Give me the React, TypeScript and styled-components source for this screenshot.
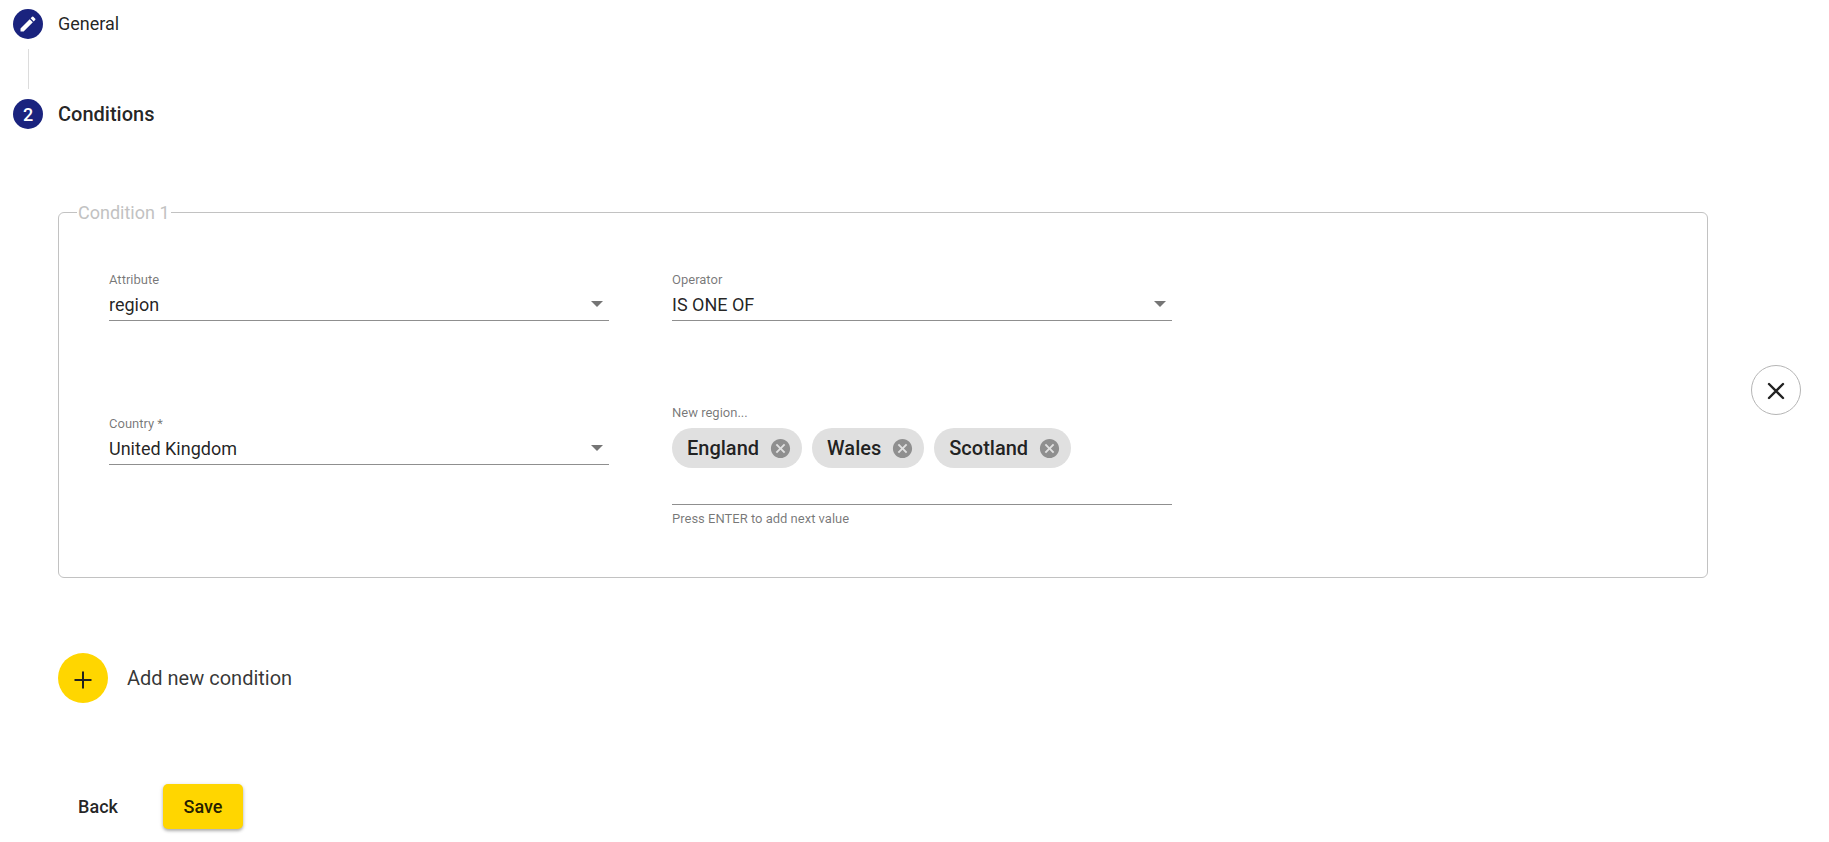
import React, { useState } from "react";
import styled, { createGlobalStyle } from "styled-components";
import { MdCancel, MdEdit } from "react-icons/md";

const GlobalStyle = createGlobalStyle`
  *, *::before, *::after { box-sizing: border-box; }
  body {
    margin: 0;
    background: #fff;
    color: rgba(0, 0, 0, 0.87);
    font-family: Roboto, "Liberation Sans", sans-serif;
    font-size: 18px;
  }
  button, select, input { font: inherit; color: inherit; }
`;

const Page = styled.main`
  padding: 9px 28px 12px 13px;
`;

const StepHeader = styled.div`
  display: flex;
  align-items: center;
  gap: 15px;
  height: 30px;
`;

const StepIcon = styled.span`
  display: flex;
  align-items: center;
  justify-content: center;
  width: 30px;
  height: 30px;
  border-radius: 50%;
  background: #1a237e;
  color: #fff;
  font-weight: 500;
`;

const StepLabel = styled.h2<{ $active?: boolean }>`
  margin: 0;
  font-size: ${(p) => (p.$active ? 20 : 18)}px;
  font-weight: ${(p) => (p.$active ? 500 : 400)};
  line-height: 24px;
`;

const StepLine = styled.div`
  width: 1px;
  height: 40px;
  margin: 10px 15px;
  background: #dcdcdc;
`;

const StepContent = styled.form`
  margin: 72px 0 0 45px;
`;

const ConditionRow = styled.div`
  display: flex;
  align-items: center;
  gap: 43px;
`;

const ConditionGroup = styled.fieldset`
  flex: 1;
  min-width: 0;
  margin: 0;
  padding: 0;
  border: 1px solid #c2c2c2;
  border-radius: 6px;
`;

const ConditionTitle = styled.legend`
  margin-left: 18px;
  padding: 2px 1px 0;
  color: #c2c2c2;
  font-size: 18px;
  line-height: 20px;
`;

const FieldGrid = styled.div`
  display: grid;
  grid-template-columns: repeat(2, minmax(0, 500px));
  align-items: center;
  gap: 33px 63px;
  padding: 49px 50px 50px;
`;

const Field = styled.div`
  padding-bottom: 51px;
`;

const FieldLabel = styled.label`
  display: block;
  color: rgba(0, 0, 0, 0.54);
  font-size: 13px;
  line-height: 16px;
`;

const SelectBox = styled.div`
  display: flex;
  align-items: center;
  height: 33px;
  padding-right: 6px;
  border-bottom: 1px solid #8f8f8f;
`;

const Select = styled.select`
  flex: 1;
  min-width: 0;
  height: 20px;
  margin: 2px 0 0;
  padding: 0;
  border: 0;
  appearance: none;
  background: none;
  outline: none;
  font-size: 18px;
  line-height: 20px;
`;

const Arrow = styled.span`
  border: 6px solid transparent;
  border-top-color: #757575;
  border-bottom: 0;
`;

const ChipBox = styled.div`
  display: flex;
  flex-wrap: wrap;
  gap: 10px;
  padding-top: 7px;
  border-bottom: 1px solid #8f8f8f;
`;

const Chip = styled.span`
  display: flex;
  align-items: center;
  gap: 10px;
  height: 40px;
  padding: 0 10px 0 15px;
  border-radius: 20px;
  background: #e0e0e0;
  font-size: 20px;
  font-weight: 500;
`;

const ChipRemove = styled.button`
  display: flex;
  padding: 0;
  border: 0;
  background: none;
  color: #8f8f8f;
  cursor: pointer;
`;

const ChipInput = styled.input`
  flex: 1 0 100%;
  height: 26px;
  padding: 0;
  border: 0;
  outline: none;
  background: none;
`;

const Hint = styled.p`
  margin: 6px 0 0;
  color: rgba(0, 0, 0, 0.54);
  font-size: 13px;
  line-height: 16px;
`;

const RoundButton = styled.button<{ $filled?: boolean }>`
  display: flex;
  flex: none;
  align-items: center;
  justify-content: center;
  width: 50px;
  height: 50px;
  padding: 3px 0 0;
  border: ${(p) => (p.$filled ? "0" : "1px solid #b5b5b5")};
  border-radius: 50%;
  background: ${(p) => (p.$filled ? "#ffd600" : "#fff")};
  cursor: pointer;
`;

const AddRow = styled.div`
  display: flex;
  align-items: center;
  gap: 19px;
  margin-top: 75px;
`;

const AddLabel = styled.label`
  font-size: 20px;
  line-height: 24px;
  color: rgba(0, 0, 0, 0.8);
`;

const Actions = styled.div`
  display: flex;
  gap: 25px;
  margin-top: 81px;
`;

const ActionButton = styled.button<{ $primary?: boolean }>`
  height: 45px;
  min-width: 80px;
  padding: 0 20px;
  border: 0;
  border-radius: 5px;
  background: ${(p) => (p.$primary ? "#ffd600" : "transparent")};
  box-shadow: ${(p) =>
    p.$primary ? "0 2px 3px rgba(0, 0, 0, 0.25), 0 1px 5px rgba(0, 0, 0, 0.12)" : "none"};
  font-size: 18px;
  font-weight: 500;
  cursor: pointer;
`;

function SelectField(props: { id: string; label: string; options: string[] }) {
  return (
    <Field>
      <FieldLabel htmlFor={props.id}>{props.label}</FieldLabel>
      <SelectBox>
        <Select id={props.id}>
          {props.options.map((o) => (
            <option key={o}>{o}</option>
          ))}
        </Select>
        <Arrow />
      </SelectBox>
    </Field>
  );
}

export default function App() {
  const [regions, setRegions] = useState(["England", "Wales", "Scotland"]);
  const [draft, setDraft] = useState("");

  const addRegion = (e: React.KeyboardEvent) => {
    if (e.key !== "Enter") return;
    e.preventDefault();
    const value = draft.trim();
    if (value && !regions.includes(value)) setRegions([...regions, value]);
    setDraft("");
  };

  return (
    <>
      <GlobalStyle />
      <Page>
        <StepHeader>
          <StepIcon>
            <MdEdit size={20} />
          </StepIcon>
          <StepLabel>General</StepLabel>
        </StepHeader>
        <StepLine />
        <StepHeader>
          <StepIcon>2</StepIcon>
          <StepLabel $active>Conditions</StepLabel>
        </StepHeader>

        <StepContent onSubmit={(e) => e.preventDefault()}>
          <ConditionRow>
            <ConditionGroup>
              <ConditionTitle>Condition 1</ConditionTitle>
              <FieldGrid>
                <SelectField id="attribute" label="Attribute" options={["region"]} />
                <SelectField id="operator" label="Operator" options={["IS ONE OF"]} />
                <SelectField id="country" label="Country *" options={["United Kingdom"]} />
                <div>
                  <FieldLabel htmlFor="region">New region...</FieldLabel>
                  <ChipBox>
                    {regions.map((r) => (
                      <Chip key={r}>
                        {r}
                        <ChipRemove
                          type="button"
                          aria-label={`Remove ${r}`}
                          onClick={() => setRegions(regions.filter((x) => x !== r))}
                        >
                          <MdCancel size={23} />
                        </ChipRemove>
                      </Chip>
                    ))}
                    <ChipInput
                      id="region"
                      value={draft}
                      onChange={(e) => setDraft(e.target.value)}
                      onKeyDown={addRegion}
                    />
                  </ChipBox>
                  <Hint>Press ENTER to add next value</Hint>
                </div>
              </FieldGrid>
            </ConditionGroup>
            <RoundButton type="button" aria-label="Remove condition">
              <svg width="18" height="18" fill="none" stroke="#212121" strokeWidth="2.4" strokeLinecap="round">
                <path d="M2 2 16 16M16 2 2 16" />
              </svg>
            </RoundButton>
          </ConditionRow>

          <AddRow>
            <RoundButton type="button" id="add" $filled>
              <svg width="18" height="18" fill="none" stroke="#212121" strokeWidth="2">
                <path d="M9 0.5V17.5M0.5 9H17.5" />
              </svg>
            </RoundButton>
            <AddLabel htmlFor="add">Add new condition</AddLabel>
          </AddRow>

          <Actions>
            <ActionButton type="button">Back</ActionButton>
            <ActionButton type="submit" $primary>
              Save
            </ActionButton>
          </Actions>
        </StepContent>
      </Page>
    </>
  );
}
